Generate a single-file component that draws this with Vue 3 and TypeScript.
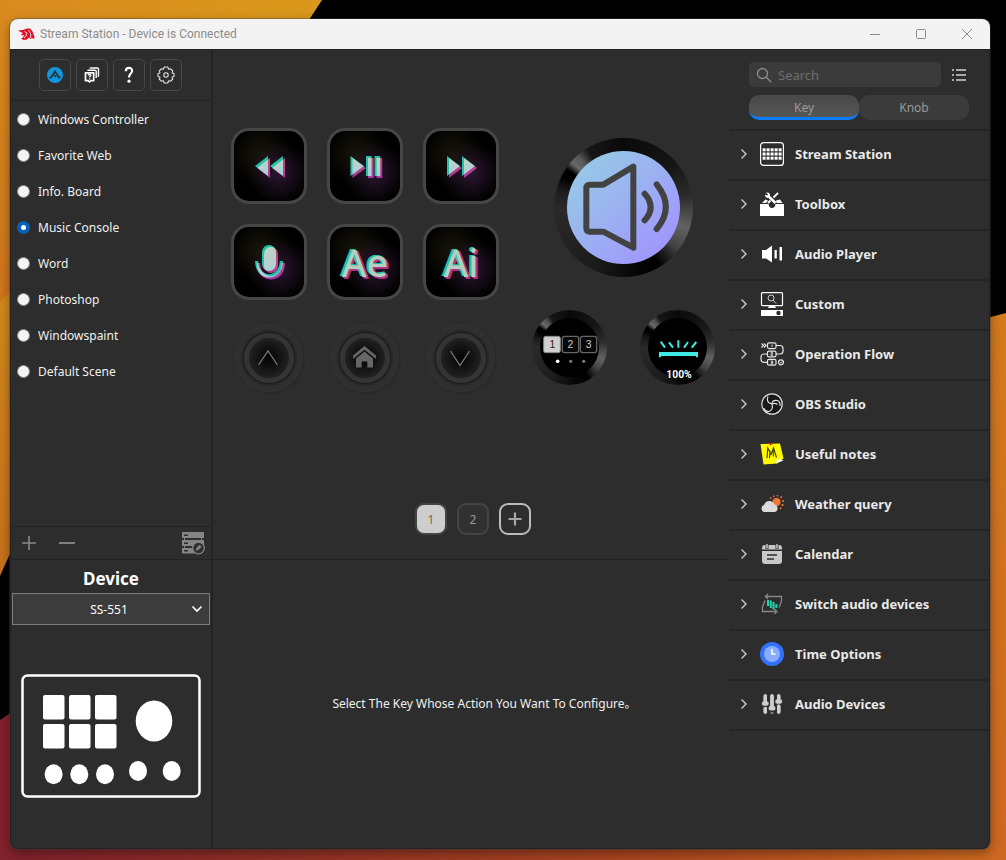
<script setup lang="ts">
import { ref } from 'vue'

const scenes = [
  'Windows Controller',
  'Favorite Web',
  'Info. Board',
  'Music Console',
  'Word',
  'Photoshop',
  'Windowspaint',
  'Default Scene',
]
const scene = ref('Music Console')

type Shape = 'rewind' | 'playpause' | 'forward' | 'mic'
const keys: { label: string; shape?: Shape; text?: string }[] = [
  { label: 'Previous track', shape: 'rewind' },
  { label: 'Play or pause', shape: 'playpause' },
  { label: 'Next track', shape: 'forward' },
  { label: 'Microphone', shape: 'mic' },
  { label: 'Ae', text: 'Ae' },
  { label: 'Ai', text: 'Ai' },
]
const shapes: Record<Shape, string> = {
  rewind: 'M37 28V48L24 38ZM52 28V48L39 38Z',
  playpause: 'M23.5 28V48L37 38ZM39 28H44.6V48H39ZM47.6 28H53.2V48H47.6Z',
  forward: 'M24 28V48L37 38ZM39 28V48L52 38Z',
  mic: 'M31 28a7 7 0 0 1 14 0v12a7 7 0 0 1-14 0ZM24 37h3.2c0 17.500 21.600 17.500 21.600 0H52c0 22-28 22-28 0Z',
}

const navs = ['up', 'home', 'down']
const pages = [1, 2]
const page = ref(1)
const tabs = ['Key', 'Knob']
const tab = ref('Key')
const query = ref('')
const device = ref('SS-551')

const categories = [
  { icon: 'grid', name: 'Stream Station' },
  { icon: 'toolbox', name: 'Toolbox' },
  { icon: 'audio', name: 'Audio Player' },
  { icon: 'custom', name: 'Custom' },
  { icon: 'flow', name: 'Operation Flow' },
  { icon: 'obs', name: 'OBS Studio' },
  { icon: 'notes', name: 'Useful notes' },
  { icon: 'weather', name: 'Weather query' },
  { icon: 'calendar', name: 'Calendar' },
  { icon: 'switch', name: 'Switch audio devices' },
  { icon: 'time', name: 'Time Options' },
  { icon: 'sliders', name: 'Audio Devices' },
]
</script>

<template>
  <div class="desktop">
    <svg class="wallpaper" viewBox="0 0 1006 860" preserveAspectRatio="none" aria-hidden="true">
      <defs>
        <linearGradient id="wp-top" x1="0" y1="0" x2="1" y2="0">
          <stop offset="0" stop-color="#d98a1f" /><stop offset="1" stop-color="#d9991b" />
        </linearGradient>
        <linearGradient id="wp-left" x1="0" y1="0" x2="0" y2="1">
          <stop offset="0" stop-color="#d98c1e" /><stop offset="1" stop-color="#cf751d" />
        </linearGradient>
        <linearGradient id="wp-left2" x1="0" y1="0" x2="0" y2="1">
          <stop offset="0" stop-color="#d3901c" /><stop offset="1" stop-color="#c9701d" />
        </linearGradient>
        <linearGradient id="wp-bottom" x1="0" y1="0" x2="1" y2="0">
          <stop offset="0" stop-color="#82222e" /><stop offset=".3" stop-color="#933126" />
          <stop offset=".7" stop-color="#b04a20" /><stop offset="1" stop-color="#cd6821" />
        </linearGradient>
        <linearGradient id="wp-right" x1="0" y1="0" x2="0" y2="1">
          <stop offset="0" stop-color="#d37b1f" /><stop offset="1" stop-color="#cd6821" />
        </linearGradient>
      </defs>
      <rect width="1006" height="860" fill="#000" />
      <path d="M0 0H322L120 310H0Z" fill="url(#wp-top)" />
      <path d="M0 20H100V310H0Z" fill="url(#wp-left)" />
      <path d="M0 302L60 240V442L0 576Z" fill="url(#wp-left2)" />
      <path d="M0 720L60 680H960V860H0Z" fill="url(#wp-bottom)" />
      <path d="M960 325L1006 313V860H960Z" fill="url(#wp-right)" />
    </svg>

    <div class="window">
      <header class="titlebar">
        <svg class="logo" width="17" height="13" viewBox="0 0 17 13" aria-hidden="true">
          <path fill="#e60d25" d="M0 2.500 5 2 9 .500 12 .500 14.500 3.500 16.500 9 16 11 14 10 12.500 11 11 9.500 9 11.500 5.500 12 3 10.500 5 9.500 6.500 7 4.500 7.500 3 6.500 5 5 2.500 4Z" />
          <path stroke="#f3f3f3" stroke-width=".9" fill="none" d="M6.500 3.500 9 5 8 8 6 10M10.500 2 12.500 5.500 12.800 10" />
        </svg>
        <h1>Stream Station - Device is Connected</h1>
        <div class="controls">
          <button aria-label="Minimize"><svg width="12" height="12" viewBox="0 0 12 12"><path d="M1 6.500H11" /></svg></button>
          <button aria-label="Maximize"><svg width="12" height="12" viewBox="0 0 12 12"><rect x="1.500" y="1.500" width="9" height="9" rx="1" /></svg></button>
          <button aria-label="Close"><svg width="12" height="12" viewBox="0 0 12 12"><path d="M1 1 11 11M11 1 1 11" /></svg></button>
        </div>
      </header>

      <div class="body">
        <aside class="sidebar">
          <div class="tools">
            <button aria-label="Store">
              <svg width="18" height="18" viewBox="0 0 18 18">
                <circle cx="9" cy="9" r="8" fill="#1296db" />
                <path d="M5 11.500 9 5.500 13 11.500M8 9 10 10.800M3.500 11.500H6M12 11.500H14.500" fill="none" stroke="#2d2d2d" stroke-width="1.600" />
              </svg>
            </button>
            <button aria-label="Tutorials">
              <svg width="18" height="18" viewBox="0 0 18 18" fill="none" stroke="#fff">
                <path d="M7 2.500Q7 2 8 2H14.500Q15.500 2 15.500 3V9.500Q15.500 10.500 14.700 10.500" stroke-width="1.400" />
                <path d="M4.700 4.800Q4.700 4.300 5.700 4.300H12Q13.200 4.300 13.200 5.300V12" stroke-width="1.400" />
                <path d="M2.500 6.800H10.700V14.700H8L6.600 16 5.200 14.700H2.500Z" stroke-width="1.700" stroke-linejoin="round" />
                <path d="M5.200 9.500C5.400 8 8 8.300 7.800 9.600 7.700 10.400 6.600 10.400 6.600 11.500M6.600 12.200V13.400" stroke-width="1.300" />
              </svg>
            </button>
            <button aria-label="Help">
              <svg width="18" height="18" viewBox="0 0 18 18" fill="none" stroke="#fff" stroke-width="2.200">
                <path d="M5.800 5.200C6 .500 12.500 1 12.100 5 11.900 7.400 9 7.700 9 11.500" />
                <circle cx="9" cy="15.200" r="1.600" fill="#fff" stroke="none" />
              </svg>
            </button>
            <button aria-label="Settings">
              <svg width="18" height="18" viewBox="0 0 18 18" fill="none" stroke="#e4e4e4" stroke-width="1.100">
                <path d="M7.200 1H10.800L11.500 3Q12.400 3.600 13.500 2.700L15.800 5Q14.700 6.200 15.200 7L17 7.500V10.500L15.200 11Q14.700 11.800 15.800 13L13.500 15.300Q12.400 14.400 11.500 15L10.800 17H7.200L6.500 15Q5.600 14.400 4.500 15.300L2.200 13Q3.300 11.800 2.800 11L1 10.500V7.500L2.800 7Q3.300 6.200 2.200 5L4.500 2.700Q5.600 3.600 6.500 3Z" stroke-linejoin="round" />
                <circle cx="9" cy="9" r="2.200" />
              </svg>
            </button>
          </div>

          <div class="scenes" role="radiogroup" aria-label="Scenes">
            <label v-for="s in scenes" :key="s" class="scene">
              <input v-model="scene" type="radio" name="scene" :value="s" />
              <span>{{ s }}</span>
            </label>
          </div>

          <div class="scene-bar">
            <button aria-label="Add scene"><svg width="16" height="16" viewBox="0 0 16 16" stroke="#8a8a8a" stroke-width="1.600"><path d="M8 1V15M1 8H15" /></svg></button>
            <button aria-label="Remove scene"><svg width="16" height="16" viewBox="0 0 16 16" stroke="#8a8a8a" stroke-width="1.800"><path d="M0 8H16" /></svg></button>
            <button class="manage" aria-label="Manage scenes">
              <svg width="24" height="24" viewBox="0 0 24 24">
                <path fill="#858585" d="M1 1H23V7H1ZM1 9H23V15H1ZM1 17H12L14 22.500H1Z" />
                <path fill="#2d2d2d" d="M3 3.500H7V5H3ZM3 11.500H7V13H3ZM3 19H7V20.500H3Z" />
                <path stroke="#858585" d="M3.500 7V9M3.500 15V17M20.500 7V9" />
                <circle cx="17.500" cy="17" r="5.800" fill="#2d2d2d" stroke="#858585" stroke-width="1.300" />
                <path d="M14.700 19.800 15.300 17 18.500 13.700 20.600 15.800 17.400 19.100Z" fill="#858585" />
              </svg>
            </button>
          </div>

          <section class="device">
            <h2><label for="device">Device</label></h2>
            <div class="select">
              <select id="device" v-model="device"><option>SS-551</option></select>
              <svg width="12" height="8" viewBox="0 0 12 8" aria-hidden="true"><path d="M1.500 1.500 6 6 10.500 1.500" fill="none" stroke="#fff" stroke-width="1.600" /></svg>
            </div>
            <svg class="device-map" viewBox="0 0 180 124" aria-hidden="true">
              <rect x="1.500" y="1.500" width="177" height="121" rx="5" fill="none" stroke="#fff" stroke-width="2.500" />
              <g fill="#fff">
                <template v-for="r in 2" :key="r">
                  <rect v-for="c in 3" :key="c" :x="22 + (c - 1) * 26" :y="21 + (r - 1) * 29" width="21.500" height="24.500" rx="2" />
                </template>
                <ellipse v-for="c in 3" :key="c" :cx="32.600 + (c - 1) * 25.700" cy="100.300" rx="9" ry="10" />
                <ellipse cx="133" cy="47" rx="18.300" ry="20.500" />
                <ellipse cx="117" cy="97" rx="9" ry="10" />
                <ellipse cx="150.700" cy="97" rx="9" ry="10" />
              </g>
            </svg>
          </section>
        </aside>

        <main class="center">
          <section class="stage">
            <div class="deck">
              <div class="keypad">
                <button v-for="k in keys" :key="k.label" class="key" :aria-label="k.label">
                  <span v-if="k.text" class="neon">{{ k.text }}</span>
                  <svg v-else-if="k.shape" width="70" height="70" viewBox="3 3 70 70">
                    <defs>
                      <linearGradient :id="'pink-' + k.shape" x1="0" y1="0" x2="0" y2="1">
                        <stop offset="0" stop-color="#b8405c" /><stop offset="1" stop-color="#a0279a" />
                      </linearGradient>
                    </defs>
                    <path :d="shapes[k.shape]" fill="#1fc4a6" />
                    <path class="screen" :d="shapes[k.shape]" transform="translate(2 2)" :fill="`url(#pink-${k.shape})`" />
                  </svg>
                </button>
                <button v-for="n in navs" :key="n" class="nav" :aria-label="n">
                  <span class="dial">
                    <svg width="40" height="40" viewBox="0 0 40 40">
                      <path v-if="n === 'up'" d="M9.500 27 19 13 28.500 27" fill="none" stroke="#777" stroke-width="1.300" />
                      <path v-else-if="n === 'down'" d="M9.500 13 19 27.500 28.500 13" fill="none" stroke="#777" stroke-width="1.300" />
                      <g v-else fill="#666">
                        <path d="M8 17.500 19.500 8 31 17.500V21L19.500 11.800 8 21Z" />
                        <path d="M11 20.500 19.500 13.500 28 20.500V29.500H22.300V23.500H16.700V29.500H11Z" />
                      </g>
                    </svg>
                  </span>
                </button>
              </div>

              <div class="knobs">
                <button class="knob big" aria-label="Volume">
                  <span class="face blue" />
                  <svg viewBox="70 55 417 417">
                    <g fill="none" stroke="#424242" stroke-width="18" stroke-linejoin="round" stroke-linecap="round">
                      <path d="M308 141V384L218 336H178Q167 336 167 325V206Q167 195 178 195H218Z" />
                      <path d="M342 222Q378 262 342 302M378 194Q433 262 378 328" />
                    </g>
                  </svg>
                </button>
                <button class="knob" aria-label="Switch page">
                  <span class="face" />
                  <svg viewBox="5 571 225 225">
                    <rect x="40" y="650" width="50" height="49" rx="6" fill="#cfcfcf" stroke="#888" stroke-width="3" />
                    <rect x="96" y="650" width="49" height="49" rx="7" fill="#080808" stroke="#666" stroke-width="4" />
                    <rect x="150" y="650" width="49" height="49" rx="7" fill="#080808" stroke="#666" stroke-width="4" />
                    <g class="digits" font-size="31" text-anchor="middle">
                      <text x="66" y="686" fill="#222">1</text>
                      <text x="120" y="686" fill="#ccc">2</text>
                      <text x="175" y="686" fill="#ccc">3</text>
                    </g>
                    <circle cx="82" cy="725" r="5.500" fill="#fff" />
                    <circle cx="121" cy="725" r="5" fill="#777" />
                    <circle cx="160" cy="725" r="5" fill="#777" />
                  </svg>
                </button>
                <button class="knob" aria-label="Brightness">
                  <span class="face" />
                  <svg viewBox="329 571 225 225">
                    <path d="M386 697H503V713H497V709H392V713H386Z" fill="#3fe9e4" />
                    <path d="M391 666 404 684M416 668 428 684M444 662V684M473 667 461 684M498 667 484 684" stroke="#3fe9e4" stroke-width="6" />
                    <text class="percent" x="446" y="774" font-size="31" font-weight="700" text-anchor="middle" fill="#fff">100%</text>
                  </svg>
                </button>
              </div>
            </div>

            <nav class="pager" aria-label="Pages">
              <button v-for="p in pages" :key="p" :class="{ on: p === page }" @click="page = p">{{ p }}</button>
              <button class="add" aria-label="Add page">
                <svg width="14" height="14" viewBox="0 0 14 14" stroke="#a5a5a5" stroke-width="2.200"><path d="M7 .500V13.500M.500 7H13.500" /></svg>
              </button>
            </nav>
          </section>
          <section class="config"><p>Select The Key Whose Action You Want To Configure。</p></section>
        </main>

        <aside class="actions">
          <div class="filters">
            <div class="search-row">
              <label class="search">
                <svg width="16" height="16" viewBox="0 0 16 16" fill="none" stroke="#8c8c8c" stroke-width="1.300" aria-hidden="true"><circle cx="6.500" cy="6.500" r="5" /><path d="M10.200 10.200 15 15" /></svg>
                <input v-model="query" type="search" placeholder="Search" aria-label="Search" />
              </label>
              <button class="list-btn" aria-label="List view">
                <svg width="14" height="14" viewBox="0 0 14 14" fill="#aaa"><path d="M0 1H2V3H0ZM0 6H2V8H0ZM0 11H2V13H0ZM4 1H14V3H4ZM4 6H14V8H4ZM4 11H14V13H4Z" /></svg>
              </button>
            </div>
            <div class="tabs" role="tablist">
              <button v-for="t in tabs" :key="t" role="tab" :aria-selected="t === tab" :class="{ on: t === tab }" @click="tab = t">{{ t }}</button>
            </div>
          </div>

          <ul class="categories">
            <li v-for="c in categories" :key="c.name">
              <button class="category" aria-expanded="false">
                <svg class="chevron" width="8" height="12" viewBox="0 0 8 12"><path d="M1.500 1.500 6 6 1.500 10.500" fill="none" stroke="#ccc" stroke-width="1.400" /></svg>
                <svg width="24" height="24" viewBox="0 0 24 24">
                  <g v-if="c.icon === 'grid'">
                    <rect x=".600" y=".600" width="22.800" height="22.800" rx="3" fill="none" stroke="#fff" stroke-width="1.200" />
                    <template v-for="r in 3" :key="r">
                      <rect v-for="n in 5" :key="n" :x="2.600 + (n - 1) * 4" :y="6.300 + (r - 1) * 4.200" width="3" height="3" fill="#fff" />
                    </template>
                  </g>
                  <g v-else-if="c.icon === 'toolbox'">
                    <path d="M0 12H8.500Q9 16 12 16T15.500 12H24V24H0Z" fill="#fff" />
                    <path d="M2 11 5.500 7.500 8 8.500 6 11ZM16.500 11 16 8.500 20 7.500 22.500 11Z" fill="#fff" />
                    <path d="M6 .500Q10.500 0 10 4L16.500 10 14.500 12 8.500 6Q5 6 5 2.500L7.200 3.500 8 2.500Z" fill="#fff" />
                    <path d="M18 1 13.500 5.500M10.500 8.500 8 11" stroke="#fff" stroke-width="1.800" fill="none" />
                  </g>
                  <g v-else-if="c.icon === 'audio'" fill="#fff">
                    <path d="M2 8H6L12 3.500V20.500L6 16.500H2ZM14.500 8H16.800V16.500H14.500ZM19.500 5H22V18.500H19.500Z" />
                  </g>
                  <g v-else-if="c.icon === 'custom'">
                    <rect x="1.500" y=".700" width="21" height="13" rx="1" fill="none" stroke="#fff" stroke-width="1.200" />
                    <circle cx="11" cy="6" r="3" fill="none" stroke="#ccc" /><path d="M13 8 16 11.500" stroke="#ccc" />
                    <path d="M9 14H15L16 16H8Z" fill="#fff" />
                    <path d="M1 18H23V24H1Z" fill="#fff" /><circle cx="18.500" cy="21" r="2.200" fill="#2d2d2d" />
                  </g>
                  <g v-else-if="c.icon === 'flow'" fill="none" stroke="#e6e6e6" stroke-width="1.200">
                    <path d="M1.500 1.500 3.500 3.500 1.500 5.500M4 1.500 6 3.500 4 5.500" />
                    <rect x="7.500" y=".800" width="8.500" height="5.800" rx="1.500" /><rect x="7.500" y="9.100" width="8.500" height="5.800" rx="1.500" /><rect x="7.500" y="17.400" width="8.500" height="5.800" rx="1.500" />
                    <path d="M16 3.500H20A3 3 0 0 1 23 6.500V9A3 3 0 0 1 20 12H16M7.500 12H4A3 3 0 0 0 1 15V17.500A3 3 0 0 0 4 20.300H7.500" />
                    <path d="M12 2.500V5.200M10.500 10.700H12.500V12H11V13.300H13M10.500 19H12.700V22H10.500M11 20.500H12.700" stroke-width=".9" />
                    <circle cx="21" cy="20.300" r="2.500" /><path d="M20 20.300 21 21.200 22.300 19.500" stroke-width=".9" />
                  </g>
                  <g v-else-if="c.icon === 'obs'" fill="none" stroke="#ddd">
                    <circle cx="12" cy="12" r="10.200" fill="#191718" stroke-width="1.200" />
                    <path d="M8 4.500Q5.500 10.500 12 12Q12 7.500 17.500 8.500Q20.500 10 20 14M12 12Q13.500 18 9 19.500Q5.500 20 3.500 16M12 12Q15 10.500 17.500 12.500" stroke-width="1.200" />
                  </g>
                  <g v-else-if="c.icon === 'notes'">
                    <path d="M.500 2 20 1.500 23.500 16.500 17 21.500 3.500 22.500Z" fill="#fdf900" /><path d="M16 21.500 17 16.500 23.500 18.500Z" fill="#fff" />
                    <path d="M7 16 7.800 6 11 12.500 13.500 6 16.500 15.500M9.500 16 10 8.500M13.500 14.500 13 8" stroke="#3a3900" stroke-width="1.100" fill="none" />
                    <path d="M10.500 3.500 8.500 1.500 10 .500 12.500 1.800Z" fill="#e11" />
                  </g>
                  <g v-else-if="c.icon === 'weather'">
                    <circle cx="16.500" cy="10" r="4" fill="#f47735" />
                    <path d="M10 5.500 11.500 6.500M13.500 3.500 14 5M17.500 3V4.500M22 4.500 20.500 6M24 9H22M23.500 13.500 21.500 12.500M21 17 20 15.500" stroke="#f47735" stroke-width="1.400" />
                    <path d="M4 20A3.700 3.700 0 0 1 4 13 Q5.500 9 9.500 9 13 9 14.500 12.500A3.900 3.900 0 0 1 15 20Z" fill="#dadada" />
                  </g>
                  <g v-else-if="c.icon === 'calendar'">
                    <path d="M2 6A3 3 0 0 1 5 3H19A3 3 0 0 1 22 6V7.500H2ZM2 9H22V19A3 3 0 0 1 19 22H5A3 3 0 0 1 2 19Z" fill="#c8c8c8" />
                    <path d="M7 2V7M17 2V7" stroke="#2d2d2d" stroke-width="3" /><path d="M7 2V6.500M17 2V6.500" stroke="#c8c8c8" stroke-width="1.500" />
                    <path d="M7 13H17M7 17H14" stroke="#2d2d2d" stroke-width="1.500" />
                  </g>
                  <g v-else-if="c.icon === 'switch'" fill="none" stroke="#888" stroke-width="1.300">
                    <path d="M21.500 9V4.500H6M8 2 5.500 4.500 8 7M2.500 15V19.500H16M14.500 17 17 19.500 14.500 22M21.500 9 19 15.500M2.500 15 5 8.500" />
                    <path d="M8 8V14M10.800 8.500V16M13.500 10V17.500M16.300 12V16" stroke="#22d5ae" stroke-width="2" />
                  </g>
                  <g v-else-if="c.icon === 'time'">
                    <circle cx="12" cy="12" r="12" fill="#3272fb" /><circle cx="12" cy="12" r="8" fill="#88adff" />
                    <path d="M12 7V12H15.500" fill="none" stroke="#fff" stroke-width="1.600" />
                  </g>
                  <g v-else stroke="#cecece" stroke-linecap="round" fill="#cecece">
                    <path d="M5.300 4V20M12 4V20M18.700 4V20" stroke-width="3.400" />
                    <path d="M2 12.600H8.600M8.700 17.500H15.300M15.400 10.500H22" stroke="#2d2d2d" stroke-width="6" stroke-linecap="butt" />
                    <path d="M4 11.500H6.600M10.700 16.200H13.300M17.400 9.500H20" stroke-width="4.400" />
                    <path d="M5.300 4V11M5.300 16.500V20M12 4V15M18.700 4V9M18.700 14V20" stroke-width="3.400" />
                  </g>
                </svg>
                <span>{{ c.name }}</span>
              </button>
            </li>
          </ul>
        </aside>
      </div>
    </div>
  </div>
</template>

<style>
body {
  margin: 0;
  background: #000;
}
</style>

<style scoped>
.desktop {
  position: relative;
  display: flex;
  box-sizing: border-box;
  min-height: 100vh;
  padding: 19px 16px 11px 10px;
  font-family: 'Noto Sans', 'Noto Sans CJK SC', sans-serif;
  font-size: 12px;
  color: #f0f0f0;
}
.desktop *,
.desktop *::before {
  box-sizing: border-box;
}
.wallpaper {
  position: absolute;
  inset: 0;
  width: 100%;
  height: 100%;
}
button {
  display: flex;
  align-items: center;
  justify-content: center;
  padding: 0;
  border: 0;
  background: none;
  color: inherit;
  font: inherit;
}
svg {
  flex: none;
}
.window {
  position: relative;
  display: flex;
  flex: 1;
  flex-direction: column;
  overflow: hidden;
  border-radius: 8px;
  background: #2d2d2d;
  box-shadow: 0 0 0 1px #4446, 0 4px 12px #0006;
}
.titlebar {
  display: flex;
  align-items: center;
  height: 31px;
  padding-left: 8px;
  border-bottom: 1px solid #202020;
  background: #f3f3f3;
  color: #8c8c8c;
}
.titlebar h1 {
  flex: 1;
  margin: 0 0 0 5px;
  font: 400 12px/16px Roboto, sans-serif;
}
.controls {
  display: flex;
}
.controls button {
  width: 46px;
  height: 30px;
}
.controls svg {
  fill: none;
  stroke: #8c8c8c;
}
.body {
  display: flex;
  flex: 1;
  border: 1px solid #222;
  border-top: 0;
  border-radius: 0 0 8px 8px;
}
.sidebar {
  display: flex;
  flex: none;
  flex-direction: column;
  width: 202px;
  border-right: 2px solid #242424;
}
.tools {
  display: flex;
  gap: 5px;
  height: 51px;
  padding: 9px 28px;
  border-bottom: 1px solid #222;
}
.tools button {
  width: 32px;
  height: 32px;
  border: 1px solid #484848;
  border-radius: 5px;
}
.scenes {
  flex: 1;
}
.scene {
  display: flex;
  align-items: center;
  gap: 8px;
  height: 36px;
  padding-left: 6px;
}
.scene input {
  width: 13px;
  height: 13px;
  margin: 0;
  appearance: none;
  border: 1px solid #8a8a8a;
  border-radius: 50%;
  background: #f3f3f3;
}
.scene input:checked {
  border: 4px solid #0560b6;
  background: #fff;
}
.scene-bar {
  display: flex;
  align-items: center;
  gap: 22px;
  height: 33px;
  padding: 0 6px 0 10px;
  border-top: 1px solid #222;
}
.manage {
  margin-left: auto;
}
.device {
  display: flex;
  flex: 0 0 289px;
  flex-direction: column;
  padding: 6px 1px 0;
  border-top: 1px solid #222;
}
.device h2 {
  margin: 0 0 2px;
  color: #fff;
  font: 700 17px/25px 'Noto Sans', sans-serif;
  text-align: center;
}
.select {
  position: relative;
}
.select select {
  width: 100%;
  height: 32px;
  padding: 0 4px 0 0;
  appearance: none;
  border: 1px solid #7a7a7a;
  border-radius: 0;
  background: #3c3c3c;
  color: #fff;
  font: inherit;
  text-align-last: center;
}
.select svg {
  position: absolute;
  top: 12px;
  right: 7px;
}
.device-map {
  width: calc(100% - 18px);
  margin: 49px 9px 0;
}
.center {
  display: flex;
  flex: 1;
  flex-direction: column;
}
.stage {
  display: flex;
  flex: 1;
  flex-direction: column;
  align-items: center;
  padding: 78px 13px 24px 18px;
}
.deck {
  display: flex;
  gap: 32px;
}
.keypad {
  display: grid;
  grid-template-columns: repeat(3, 76px);
  grid-auto-rows: 76px;
  gap: 20px;
}
.key {
  isolation: isolate;
  border: 3px solid #464646;
  border-radius: 18px;
  background:
    radial-gradient(circle at 64% 60%, #2b1630 0, #2b163000 50%),
    radial-gradient(circle at 38% 34%, #17150a 0, #17150a00 50%), #000;
}
.screen {
  mix-blend-mode: screen;
}
.neon {
  color: #b4cfc0;
  font: 500 38px/70px 'Noto Sans', sans-serif;
  text-shadow: -1px -1px #1fc4a6, -2px -1px #1fc4a6, 1px 1px #b3357c, 2px 1px #b3357c, 2px 2px #a82c92;
}
.nav {
  width: 68px;
  height: 68px;
  margin: 4px;
  border: 1px solid #353535;
  border-radius: 50%;
  background: #2f2f2f;
  box-shadow: 1px 1px 2px #262626;
}
.dial {
  display: block;
  width: 50px;
  height: 50px;
  border: 5px solid #343434;
  border-radius: 50%;
  background: radial-gradient(circle, #030303 0, #1c1c1c 60%, #242424 75%);
  box-shadow: 0 0 3px 1px #101010;
}
.dial svg {
  display: block;
}
.knobs {
  display: grid;
  grid-template-columns: 76px 76px;
  align-content: start;
  justify-items: center;
  gap: 33px 32px;
  padding-top: 10px;
}
.knob {
  position: relative;
  width: 75px;
  height: 75px;
  border-radius: 50%;
  background: conic-gradient(#0a0a0a, #161616 50deg, #2c2c2c 80deg, #626262 108deg, #454545 126deg, #000 148deg, #060606 170deg, #1b1b1b 205deg, #2a2a2a 270deg, #1c1c1c 285deg, #000 298deg, #000 304deg, #696969 311deg, #555 319deg, #161616 328deg, #0a0a0a);
}
.knob.big {
  grid-column: 1 / -1;
  width: 139px;
  height: 139px;
}
.face {
  position: absolute;
  inset: 8px;
  border-radius: 50%;
  background: #000;
}
.face.blue {
  inset: 13px;
  background: linear-gradient(135deg, #96cbe5 10%, #a195ff 88%);
}
.knob svg {
  position: relative;
  width: 100%;
  height: 100%;
}
.digits {
  font-family: 'Liberation Sans', Arial, sans-serif;
}
.percent {
  font-family: Roboto, sans-serif;
}
.pager {
  display: flex;
  gap: 10px;
  margin-top: auto;
}
.pager button {
  width: 32px;
  height: 32px;
  border: 2px solid #454545;
  border-radius: 9px;
  background: #313131;
  color: #999;
}
.pager .on {
  background: #cdcdcd;
  color: #87653a;
}
.pager .add {
  border-color: #bbb;
  background: #2d2d2d;
}
.config {
  display: flex;
  flex: 0 0 289px;
  align-items: center;
  justify-content: center;
  padding: 0 0 2px 28px;
  border-top: 1px solid #222;
}
.config p {
  margin: 0;
}
.actions {
  flex: none;
  width: 261px;
}
.filters {
  display: flex;
  flex-direction: column;
  gap: 8px;
  height: 79px;
  padding: 12px 20px 0 21px;
}
.search-row {
  display: flex;
  gap: 11px;
}
.search {
  display: flex;
  flex: 1;
  align-items: center;
  gap: 6px;
  min-width: 0;
  height: 25px;
  padding: 0 8px 0 7px;
  border-radius: 5px;
  background: #3b3b3b;
}
.search input {
  flex: 1;
  min-width: 0;
  padding: 0;
  border: 0;
  outline: 0;
  background: none;
  color: #ddd;
  font: 13px/20px 'Noto Sans', sans-serif;
}
.search input::placeholder {
  color: #6e6e6e;
  opacity: 1;
}
.list-btn {
  justify-content: flex-start;
  width: 17px;
}
.tabs {
  display: flex;
}
.tabs button {
  flex: 1;
  height: 25px;
  border-radius: 10px;
  background: #3b3b3b;
  color: #9a9a9a;
}
.tabs .on {
  border-bottom: 3px solid #0a7cff;
  background: linear-gradient(#484848, #565656);
  padding-top: 3px;
}
.categories {
  margin: 0 0 0 1px;
  padding: 0;
  border-top: 2px solid #242424;
  list-style: none;
}
.category {
  justify-content: flex-start;
  width: 100%;
  height: 50px;
  padding: 0 0 2px 11px;
  border-bottom: 2px solid #242424;
  color: #e9e9e9;
  font: 700 13px/20px 'Noto Sans', sans-serif;
}
.chevron {
  margin-right: 12px;
}
.category span {
  margin-left: 11px;
}
</style>
